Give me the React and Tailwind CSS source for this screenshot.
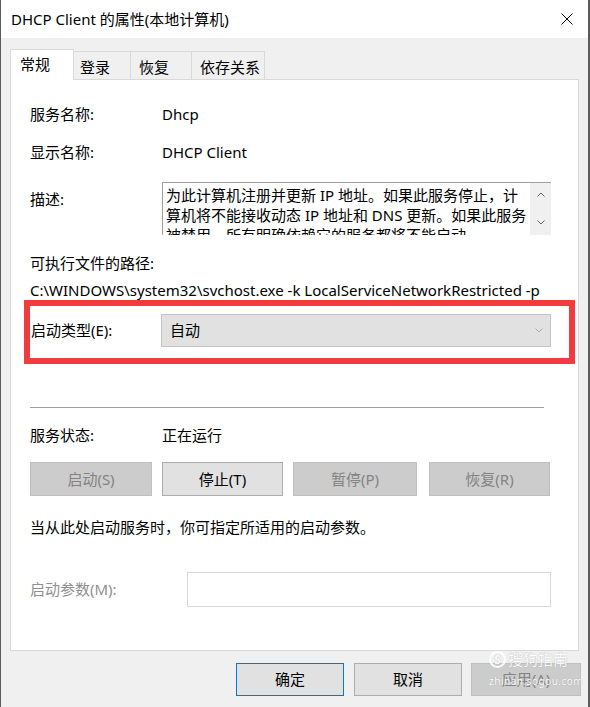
import React from "react";

function Chevron({ up, color = "#606060" }) {
  return (
    <svg width="8" height="5" viewBox="0 0 8 5" className="block">
      <path
        d={up ? "M0.5 4.5 L4 1 L7.5 4.5" : "M0.5 0.5 L4 4 L7.5 0.5"}
        fill="none"
        stroke={color}
        strokeWidth="1"
      />
    </svg>
  );
}

export default function App() {
  return (
    <div className="w-[590px] h-[707px] bg-[#f0f0f0] border-l border-r-2 border-[#5c5c5c] flex flex-col text-[15px] text-black font-['Noto_Sans','Noto_Sans_CJK_SC',sans-serif] relative overflow-hidden">
      {/* title bar */}
      <div className="h-[38px] bg-white flex items-center justify-between pl-[10px] pr-[15px] shrink-0">
        <span className="leading-none">DHCP Client 的属性(本地计算机)</span>
        <svg width="12" height="12" viewBox="0 0 12 12" className="block">
          <path d="M0.5 0.5 L11.5 11.5 M11.5 0.5 L0.5 11.5" stroke="#000" strokeWidth="1" />
        </svg>
      </div>

      {/* tabs */}
      <div className="flex items-start pl-[9px] mt-[11px] h-[30px] shrink-0">
        <div className="relative z-10 w-[64px] h-[31px] bg-white border border-b-0 border-[#d9d9d9] pl-[9px] pt-[4px] leading-[20px]">
          常规
        </div>
        <div className="mt-[2px] w-[57px] h-[28px] border border-l-0 border-b-0 border-[#d9d9d9] pl-[6px] pt-[5px] leading-[20px]">
          登录
        </div>
        <div className="mt-[2px] w-[61px] h-[28px] border border-l-0 border-b-0 border-[#d9d9d9] pl-[8px] pt-[5px] leading-[20px]">
          恢复
        </div>
        <div className="mt-[2px] w-[73px] h-[28px] border border-l-0 border-b-0 border-[#d9d9d9] pl-[8px] pt-[5px] leading-[20px]">
          依存关系
        </div>
      </div>

      {/* panel */}
      <div className="ml-[9px] w-[569px] h-[572px] bg-white border border-[#d9d9d9] flex flex-col pl-[19px] shrink-0">
        <div className="mt-[22px] h-[24px] flex items-center">
          <div className="w-[132px]">服务名称:</div>
          <div>Dhcp</div>
        </div>
        <div className="mt-[14px] h-[24px] flex items-center">
          <div className="w-[132px]">显示名称:</div>
          <div>DHCP Client</div>
        </div>
        <div className="mt-[18px] flex items-start">
          <div className="w-[132px] mt-[5px] leading-[24px]">描述:</div>
          <div className="w-[389px] h-[53px] border-t border-l border-[#a0a0a0] flex overflow-hidden">
            <div className="flex-1 pl-[3px] pt-[2px] leading-[20px] overflow-hidden">
              <div className="whitespace-nowrap">为此计算机注册并更新 IP 地址。如果此服务停止，计</div>
              <div className="whitespace-nowrap">算机将不能接收动态 IP 地址和 DNS 更新。如果此服务</div>
              <div className="whitespace-nowrap">被禁用，所有明确依赖它的服务都将不能启动。</div>
            </div>
            <div className="w-[21px] bg-[#f0f0f0] flex flex-col items-center justify-between pt-[9px] pb-[10px]">
              <Chevron up />
              <Chevron />
            </div>
          </div>
        </div>
        <div className="mt-[16px] h-[24px] flex items-center">可执行文件的路径:</div>
        <div className="mt-[5px] h-[20px] flex items-center whitespace-nowrap">
          C:\WINDOWS\system32\svchost.exe -k LocalServiceNetworkRestricted -p
        </div>

        {/* highlighted startup type */}
        <div className="-ml-[6px] w-[551px] h-[64px] border-[6px] border-[#f23b3e] flex items-start">
          <div className="w-[131px] mt-[8px] h-[33px] flex items-center pl-[1px]">启动类型(E):</div>
          <div className="mt-[8px] w-[390px] h-[33px] bg-[#e1e1e1] border border-[#c4c4c4] flex items-center justify-between pl-[8px] pr-[7px]">
            <span>自动</span>
            <Chevron color="#a8a8a8" />
          </div>
        </div>

        <div className="mt-[43px] h-px w-[514px] bg-[#a0a0a0]" />

        <div className="mt-[15px] h-[24px] flex items-center">
          <div className="w-[132px]">服务状态:</div>
          <div>正在运行</div>
        </div>

        <div className="mt-[15px] h-[34px] flex">
          <div className="w-[122px] h-[34px] bg-[#cccccc] border border-[#c0c0c0] text-[#838383] flex items-center justify-center">
            启动(S)
          </div>
          <div className="ml-[10px] w-[121px] h-[34px] bg-[#e1e1e1] border border-[#adadad] flex items-center justify-center">
            停止(T)
          </div>
          <div className="ml-[10px] w-[124px] h-[34px] bg-[#cccccc] border border-[#c0c0c0] text-[#838383] flex items-center justify-center">
            暂停(P)
          </div>
          <div className="ml-[12px] w-[121px] h-[34px] bg-[#cccccc] border border-[#c0c0c0] text-[#838383] flex items-center justify-center">
            恢复(R)
          </div>
        </div>

        <div className="mt-[19px] h-[24px] flex items-center">当从此处启动服务时，你可指定所适用的启动参数。</div>

        <div className="mt-[33px] h-[35px] flex items-center">
          <div className="w-[157px] text-[#8f8f8f]">启动参数(M):</div>
          <div className="w-[364px] h-[35px] bg-white border border-[#d9d9d9]" />
        </div>
      </div>

      {/* bottom buttons */}
      <div className="mt-[12px] flex pl-[235px] shrink-0">
        <div className="w-[108px] h-[33px] bg-[#e1e1e1] border border-[#0078d7] flex items-center justify-center">
          确定
        </div>
        <div className="ml-[10px] w-[108px] h-[33px] bg-[#e1e1e1] border border-[#adadad] flex items-center justify-center">
          取消
        </div>
        <div className="ml-[9px] w-[110px] h-[33px] bg-[#cccccc] border border-[#c0c0c0] text-[#838383] flex items-center justify-center">
          应用(A)
        </div>
      </div>

      {/* watermark */}
      <div className="absolute left-[488px] top-[651px] flex flex-col items-start text-white opacity-90 pointer-events-none [text-shadow:0_0_1px_#9a9a9a]">
        <div className="flex items-center gap-[2px] leading-none">
          <span className="w-[17px] h-[17px] rounded-full border-2 border-white flex items-center justify-center text-[12px] font-bold">S</span>
          <span className="text-[15px]">搜狗指南</span>
        </div>
        <div className="text-[10px] leading-none mt-[8px] tracking-[0.5px]">zhinan.sogou.com</div>
      </div>
    </div>
  );
}
